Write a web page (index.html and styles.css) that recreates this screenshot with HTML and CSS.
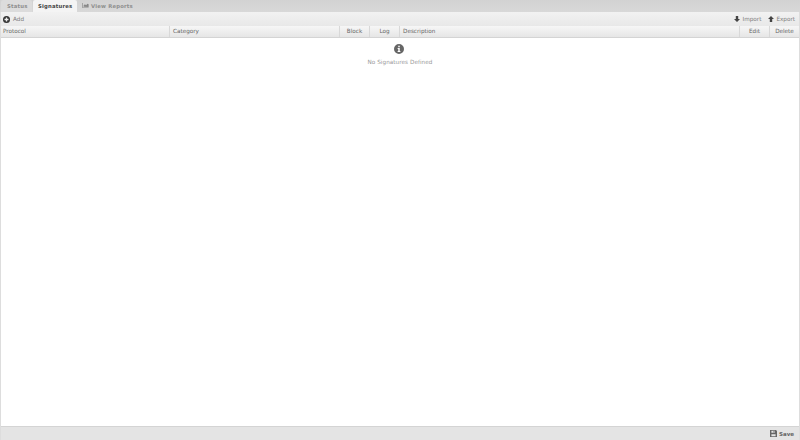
FILE: index.html
```html
<!DOCTYPE html>
<html lang="en">
<head>
    <meta charset="UTF-8">
    <title>Signatures</title>
    <link rel="stylesheet" href="styles.css">
</head>
<body>
    <div class="page">
        <div class="tabs">
            <div class="tab status">Status</div>
            <div class="tab active">Signatures</div>
            <div class="tab reports">
                <svg class="icon-chart" viewBox="0 0 10 8"><path d="M0 0h1v7h9v1H0z"/><path d="M2 6V4l2-2 2 1.500 2-2.500 2 1v4.500z"/></svg>
                View Reports
            </div>
        </div>
        <div class="toolbar">
            <div class="tool add">
                <svg class="icon-add" viewBox="0 0 16 16"><circle cx="8" cy="8" r="8"/><path d="M6.500 3.500h3v3h3v3h-3v3h-3v-3h-3v-3h3z" fill="#eee"/></svg>
                Add
            </div>
            <div class="tool-right">
                <div class="tool">
                    <svg class="icon-arrow" viewBox="0 0 10 10"><path d="M3 0h4v5h3L5 10 0 5h3z"/></svg>
                    Import
                </div>
                <div class="tool">
                    <svg class="icon-arrow" viewBox="0 0 10 10"><path d="M3 10h4V5h3L5 0 0 5h3z"/></svg>
                    Export
                </div>
            </div>
        </div>
        <div class="header">
            <div class="col col-protocol">Protocol</div>
            <div class="col col-category">Category</div>
            <div class="col col-small center">Block</div>
            <div class="col col-small center">Log</div>
            <div class="col col-desc">Description</div>
            <div class="col col-small center">Edit</div>
            <div class="col col-last center">Delete</div>
        </div>
        <div class="content">
            <svg class="icon-info" viewBox="0 0 16 16"><path fill-rule="evenodd" d="M8 0a8 8 0 1 1 0 16A8 8 0 0 1 8 0zM6.800 2.600v2.500h2.400V2.600zM5.800 6.500v1.500h1v3.200h-1v1.700h4.400v-1.700h-1V6.500z"/></svg>
            <div class="empty-text">No Signatures Defined</div>
        </div>
        <div class="footer">
            <div class="save">
                <svg class="icon-save" viewBox="0 0 10 10"><path fill-rule="evenodd" d="M0 0h8.500L10 1.500V10H0zM2 1v3h5V1zM5 1.500h1.300v2H5zM2 6v3h6V6z"/></svg>
                Save
            </div>
        </div>
    </div>
</body>
</html>
```

FILE: styles.css
```css
* {
    margin: 0;
    padding: 0;
    box-sizing: border-box;
}

body {
    width: 800px;
    height: 440px;
    overflow: hidden;
    font-family: "DejaVu Sans", sans-serif;
    font-size: 5.700px;
    color: #666;
    background: #fff;
}

.page {
    display: flex;
    flex-direction: column;
    height: 100%;
    border-left: 1px solid #ddd;
    border-right: 1px solid #ddd;
}

.tabs {
    display: flex;
    height: 12px;
    padding-left: 1px;
    gap: 1px;
    background: linear-gradient(#d2d2d2, #d8d8d8);
    margin: 0 -1px;
}

.tab {
    display: flex;
    align-items: center;
    gap: 2px;
    height: 12px;
    padding: 0 5px 1px;
    font-size: 5.300px;
    font-weight: bold;
    letter-spacing: 0.200px;
    color: #8f8f8f;
    border-radius: 2px 2px 0 0;
}

.tab.status {
    width: 31px;
    padding-left: 6px;
    background: #dcdcdc;
}

.tab.active {
    width: 44px;
    color: #444;
    background: #f4f4f4;
}

.tab.reports {
    padding-left: 4px;
}

.icon-chart {
    width: 7px;
    height: 5px;
    fill: #888;
}

.toolbar {
    display: flex;
    justify-content: space-between;
    align-items: center;
    height: 14px;
    padding: 0 4px 0 2px;
    background: linear-gradient(#f2f2f2, #e8e8e8);
}

.tool-right {
    display: flex;
    gap: 7px;
}

.tool {
    display: flex;
    align-items: center;
    gap: 2px;
    color: #808080;
}

.tool.add {
    gap: 3px;
}

.icon-add {
    width: 7px;
    height: 7px;
    fill: #333;
}

.icon-arrow {
    width: 6px;
    height: 6px;
    fill: #444;
}

.header {
    display: flex;
    height: 12px;
    background: linear-gradient(#f6f6f6, #e6e6e6);
    border-bottom: 1px solid #d4d4d4;
}

.col {
    display: flex;
    align-items: center;
    padding: 0 0 1px 3px;
    color: #666;
    border-right: 1px solid #d8d8d8;
}

.col-protocol {
    width: 169px;
    padding-left: 2px;
}

.col-category {
    width: 170px;
}

.col-small {
    width: 30px;
}

.col-desc {
    flex: 1;
}

.col-last {
    width: 29px;
    border-right: none;
}

.center {
    justify-content: center;
    padding-left: 0;
}

.content {
    flex: 1;
    display: flex;
    flex-direction: column;
    align-items: center;
    padding-top: 6px;
    background: #fff;
}

.icon-info {
    width: 10px;
    height: 10px;
    fill: #666;
    margin-left: -3px;
}

.empty-text {
    margin-top: 5px;
    color: #999;
    letter-spacing: 0.050px;
}

.footer {
    display: flex;
    justify-content: flex-end;
    align-items: center;
    height: 14px;
    padding-right: 5px;
    background: #e4e4e4;
    border-top: 1px solid #d4d4d4;
}

.save {
    display: flex;
    align-items: center;
    gap: 2px;
    font-size: 5.500px;
    font-weight: bold;
    color: #666;
}

.icon-save {
    width: 7px;
    height: 7px;
    fill: #666;
}
```
